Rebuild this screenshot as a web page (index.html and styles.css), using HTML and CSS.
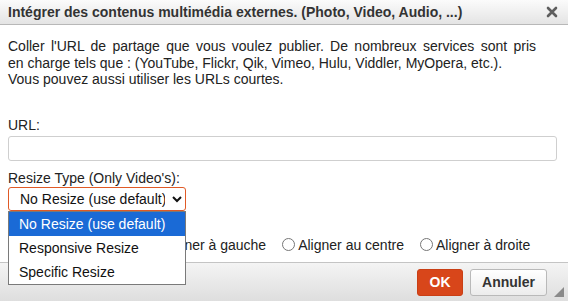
FILE: index.html
```html
<!DOCTYPE html>
<html lang="fr">
<head>
    <meta charset="UTF-8">
    <meta name="viewport" content="width=device-width, initial-scale=1.0">
    <title>Intégrer des contenus multimédia externes</title>
    <link rel="stylesheet" href="styles.css">
</head>
<body>
    <div class="dialog">
        <div class="dialog-title">
            <span>Intégrer des contenus multimédia externes. (Photo, Video, Audio, ...)</span>
            <button class="close-btn" title="Fermer">
                <svg width="12" height="12" viewBox="0 0 12 12">
                    <path d="M2 2 L10 10 M10 2 L2 10" stroke="#5e5e5e" stroke-width="2.6" stroke-linecap="round"/>
                </svg>
            </button>
        </div>

        <div class="dialog-body">
            <p class="intro">
                <span class="intro-first">Coller l'URL de partage que vous voulez publier. De nombreux services sont pris</span>
                en charge tels que : (YouTube, Flickr, Qik, Vimeo, Hulu, Viddler, MyOpera, etc.).<br>
                Vous pouvez aussi utiliser les URLs courtes.
            </p>

            <label class="field-label" for="url">URL:</label>
            <input type="text" id="url" class="url-input">

            <label class="field-label label-resize" for="resize">Resize Type (Only Video's):</label>
            <div class="select-wrap">
                <select id="resize" class="resize-select">
                    <option>No Resize (use default)</option>
                    <option>Responsive Resize</option>
                    <option>Specific Resize</option>
                </select>
                <!-- liste ouverte du select -->
                <ul class="select-popup">
                    <li class="active">No Resize (use default)</li>
                    <li>Responsive Resize</li>
                    <li>Specific Resize</li>
                </ul>
            </div>

            <div class="align-row">
                <label class="align-none"><input type="radio" name="align" checked>Aucun alignement</label>
                <label><input type="radio" name="align">Aligner à gauche</label>
                <label><input type="radio" name="align">Aligner au centre</label>
                <label><input type="radio" name="align">Aligner à droite</label>
            </div>
        </div>

        <div class="dialog-footer">
            <button class="btn btn-ok">OK</button>
            <button class="btn btn-cancel">Annuler</button>
            <span class="resize-grip"></span>
        </div>
    </div>
</body>
</html>
```

FILE: styles.css
```css
body {
    margin: 0;
    padding: 0;
    font-family: Arial, "Liberation Sans", sans-serif;
    font-size: 14px;
    color: #222;
    background-color: #fff;
}

.dialog {
    height: 301px;
    display: flex;
    flex-direction: column;
    overflow: hidden;
}

.dialog-title {
    height: 24px;
    display: flex;
    align-items: center;
    justify-content: space-between;
    padding: 0 9px 0 8px;
    background: linear-gradient(#fbfbfb, #e4e4e4);
    border-bottom: 1px solid #b8b8b8;
    font-weight: bold;
    color: #333;
}

.close-btn {
    border: none;
    background: none;
    padding: 0;
    width: 14px;
    height: 14px;
    display: flex;
    align-items: center;
    justify-content: center;
    cursor: pointer;
}

.dialog-body {
    flex: 1;
    padding: 13px 11px 0 8px;
}

.intro {
    width: 528px;
    margin: 0;
    line-height: 16.5px;
}

/* la premiere ligne est justifiee sur toute la largeur */
.intro-first {
    display: block;
    text-align: justify;
    text-align-last: justify;
}

.field-label {
    display: block;
    margin-top: 29px;
    line-height: 16px;
}

.label-resize {
    margin-top: 9px;
}

.url-input {
    display: block;
    width: 100%;
    height: 25px;
    margin-top: 3px;
    box-sizing: border-box;
    border: 1px solid #cfcfcf;
    border-radius: 3px;
    font-size: 13px;
}

.select-wrap {
    position: relative;
    width: 178px;
    margin-top: 1px;
}

.resize-select {
    display: block;
    width: 178px;
    height: 24px;
    padding: 0 4px 0 7px;
    border: 1px solid #e05a26;
    border-radius: 3px;
    background-color: #fff;
    color: #111;
    font-family: Arial, "Liberation Sans", sans-serif;
    font-size: 14px;
}

.select-popup {
    position: absolute;
    top: 24px;
    left: 0;
    z-index: 10;
    width: 178px;
    box-sizing: border-box;
    margin: 0;
    padding: 0;
    list-style: none;
    background-color: #fff;
    border: 1px solid #7a7a7a;
    font-size: 14px;
    color: #111;
}

.select-popup li {
    height: 24px;
    line-height: 24px;
    padding-left: 10px;
}

.select-popup li.active {
    background-color: #1a6ad6;
    color: #fff;
}

.align-row {
    display: flex;
    align-items: center;
    margin-top: 26px;
    line-height: 16px;
}

.align-row label {
    display: flex;
    align-items: center;
    margin-right: 11px;
}

.align-row .align-none {
    margin-right: 4px;
}

.align-row input {
    margin: 0 3px 0 5px;
    width: 13px;
    height: 13px;
}

.align-row .align-none input {
    margin-left: 0;
}

.dialog-footer {
    position: relative;
    height: 38px;
    display: flex;
    align-items: center;
    justify-content: flex-end;
    gap: 7px;
    padding: 0 21px 0 0;
    background: linear-gradient(#f4f4f4, #dedede);
    border-top: 1px solid #c4c4c4;
}

.btn {
    height: 27px;
    border-radius: 3px;
    font-family: Arial, "Liberation Sans", sans-serif;
    font-size: 14px;
    font-weight: bold;
    cursor: pointer;
}

.btn-ok {
    width: 46px;
    background-color: #d8461a;
    border: 1px solid #c93f15;
    color: #fff;
}

.btn-cancel {
    width: 77px;
    background: linear-gradient(#ffffff, #ececec);
    border: 1px solid #b9b9b9;
    color: #333;
}

.resize-grip {
    position: absolute;
    right: 4px;
    bottom: 4px;
    width: 0;
    height: 0;
    border-left: 10px solid transparent;
    border-bottom: 10px solid #8a8a8a;
}
```
